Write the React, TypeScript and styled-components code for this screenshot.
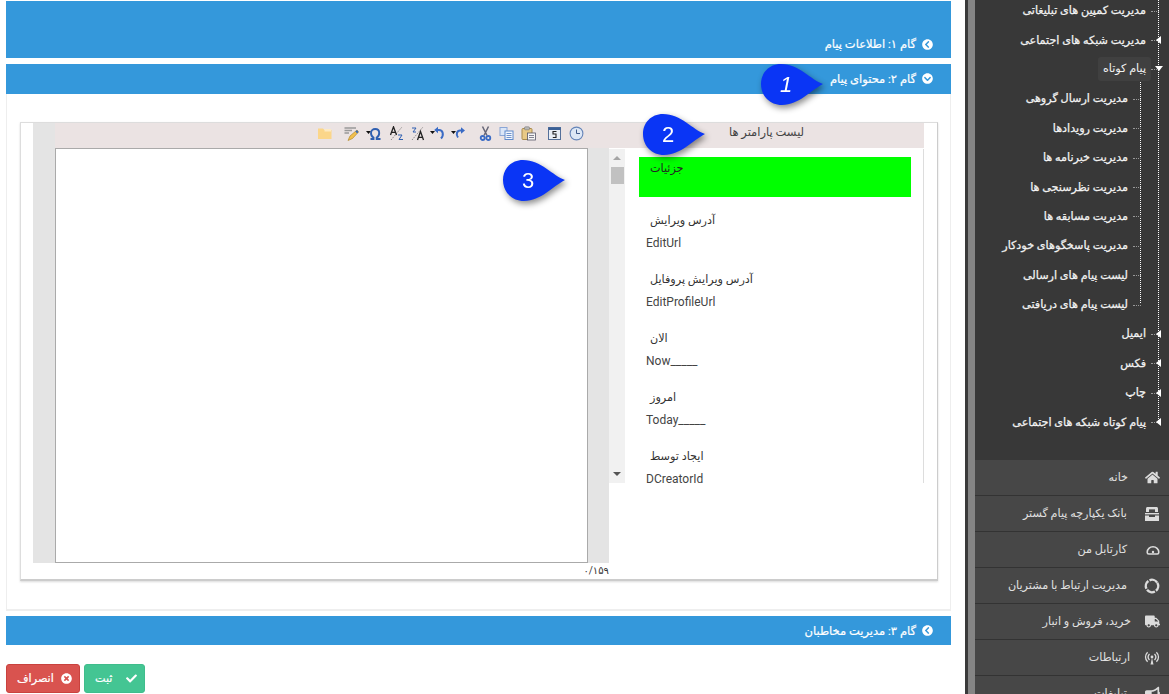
import React from "react";
import styled, { createGlobalStyle } from "styled-components";
import {
  FaBullhorn,
  FaCheck,
  FaChevronCircleDown,
  FaChevronCircleLeft,
  FaHome,
  FaTimesCircle,
  FaTruck
} from "react-icons/fa";

const FONT = `Roboto, "DejaVu Sans", sans-serif`;

const Global = createGlobalStyle`
  html, body { margin: 0; padding: 0; height: 694px; overflow: hidden; background: #fff; }
  body { font-family: ${FONT}; direction: rtl; }
  ul { list-style: none; margin: 0; padding: 0; }
`;

const Page = styled.div`
  display: flex;
  width: 1169px;
  height: 694px;
  overflow: hidden;
`;

/* ---------- sidebar ---------- */

const Sidebar = styled.aside`
  display: flex;
  width: 204px;
  height: 694px;
  flex: none;
  overflow: hidden;
`;

const SideInner = styled.div`
  flex: 1;
  display: flex;
  flex-direction: column;
`;

const Strip = styled.div`
  width: 7px;
  flex: none;
  background: #858585;
  border-left: 3px solid #3a3a3a;
`;

const TreeArea = styled.div`
  height: 460px;
  flex: none;
  background: #383838;
  overflow: hidden;
`;

const Tree = styled.ul`
  position: relative;
  margin: -4px 10px 0 0;

  &::before {
    content: "";
    position: absolute;
    top: 0;
    bottom: 14px;
    right: 0;
    border-right: 1px dotted #fff;
  }
`;

const SubTree = styled.ul`
  position: relative;
  margin-right: 18px;

  &::before {
    content: "";
    position: absolute;
    top: -2px;
    bottom: 16px;
    right: 0;
    border-right: 1px dotted #fff;
  }
`;

const TreeRow = styled.li<{ $arrow?: "left" | "down" }>`
  position: relative;
  height: 29.4px;
  display: flex;
  align-items: center;
  padding-right: 13px;
  font-size: 11.2px;
  -webkit-text-stroke: 0.25px #f2f2f2;
  color: #f2f2f2;
  white-space: nowrap;

  &::before {
    content: "";
    position: absolute;
    top: 50%;
    right: 0;
    width: 8px;
    border-top: 1px dotted #999;
  }

  ${p =>
    p.$arrow === "left"
      ? `&::after {
          content: "";
          position: absolute;
          top: calc(50% - 4px);
          right: -2px;
          border-style: solid;
          border-width: 4px 5px 4px 0;
          border-color: transparent #fff transparent transparent;
        }`
      : ""}
  ${p =>
    p.$arrow === "down"
      ? `&::after {
          content: "";
          position: absolute;
          top: calc(50% - 3px);
          right: -4px;
          border-style: solid;
          border-width: 5px 4px 0 4px;
          border-color: #fff transparent transparent transparent;
        }`
      : ""}
`;

const ActiveLabel = styled.span`
  background: #404040;
  border-radius: 3px;
  height: 24px;
  line-height: 24px;
  padding: 0 5px;
  margin-right: -5px;
  -webkit-text-stroke: 0;
`;

const MenuArea = styled.ul`
  flex: 1;
  background: #474747;
`;

const MenuRow = styled.li`
  height: 35px;
  display: flex;
  align-items: center;
  border-bottom: 1px solid #333;
  color: #e0e0e0;
  font-size: 11.2px;
  white-space: nowrap;
  padding-right: 9px;
`;

const MenuIcon = styled.span<{ $slot: number }>`
  width: ${p => p.$slot}px;
  flex: none;
  display: flex;
  justify-content: flex-start;
  color: #dcdcdc;
  font-size: 15px;
`;

/* ---------- main ---------- */

const Main = styled.main`
  position: relative;
  width: 965px;
  flex: none;
  padding: 1px 14px 0 0;
  box-sizing: border-box;
`;

const Shell = styled.div`
  width: 945px;
`;

const StepBar = styled.div<{ $height: number; $top?: number; $low?: boolean }>`
  height: ${p => p.$height}px;
  margin-top: ${p => p.$top ?? 0}px;
  box-sizing: border-box;
  background: #3498db;
  color: #fff;
  display: flex;
  align-items: ${p => (p.$low ? "flex-end" : "center")};
  gap: 6px;
  padding: 0 18px ${p => (p.$low ? 7 : 0)}px 0;
  font-size: 11.5px;
  -webkit-text-stroke: 0.2px #fff;
  svg { font-size: 11px; flex: none; margin-bottom: 1px; }
`;

const PanelBody = styled.div`
  height: 517px;
  box-sizing: border-box;
  padding: 28px 12px 0 13px;
  border: 1px solid #eee;
  border-top: 0;
  border-bottom-width: 2px;
  margin-bottom: 5px;
`;

const EditorBox = styled.div`
  height: 459px;
  box-sizing: border-box;
  border: 1px solid #ddd;
  border-bottom: 2px solid #ccc;
  border-right: 1px solid #ccc;
  padding: 0 13px 0 12px;
  display: flex;
  box-shadow: 0 1px 2px rgba(0, 0, 0, 0.15);
`;

const ListColumn = styled.div`
  width: 315px;
  flex: none;
`;

const ListTitle = styled.div`
  height: 25px;
  background: #ebe3e3;
  text-align: center;
  font-size: 11.5px;
  line-height: 19px;
  color: #444;
  border-bottom: 1px solid #fff;
`;

const ListBody = styled.div`
  position: relative;
  height: 334px;
  overflow: hidden;
  border-right: 1px solid #ddd;
  box-sizing: border-box;
  direction: ltr;
  padding: 8px 0 0 37px;
`;

const ScrollTrack = styled.div`
  position: absolute;
  left: 0;
  top: 0;
  width: 16px;
  height: 100%;
  background: #f1f1f1;
`;

const ScrollThumb = styled.div`
  position: absolute;
  left: 2px;
  top: 18px;
  width: 13px;
  height: 17px;
  background: #c1c1c1;
`;

const ScrollArrow = styled.div<{ $down?: boolean }>`
  position: absolute;
  left: 4px;
  ${p => (p.$down ? "bottom: 7px;" : "top: 7px;")}
  border-style: solid;
  border-color: transparent;
  border-width: ${p => (p.$down ? "4px 4px 0 4px" : "0 4px 4px 4px")};
  ${p => (p.$down ? "border-top-color: #555;" : "border-bottom-color: #a5a5a5;")}
`;

const ParamItem = styled.div`
  height: 59px;
  color: #333;
  font-size: 11.2px;
`;

const GreenItem = styled.div`
  width: 272px;
  height: 40px;
  margin: 0 0 14px -7px;
  background: #0f0;
  box-sizing: border-box;
  padding: 5px 0 0 11px;
  font-size: 11.2px;
  color: #222;
  direction: ltr;
`;

const ParamLabel = styled.div`
  height: 23px;
  line-height: 20px;
  margin-left: 4px;
  direction: rtl;
  width: fit-content;
`;

const ParamCode = styled.div`
  height: 19px;
  line-height: 18px;
  font-size: 12px;
  color: #444;
`;

const EditorColumn = styled.div`
  width: 576px;
  flex: none;
`;

const EditorFrame = styled.div`
  display: grid;
  grid-template-columns: 21px 533px 22px;
  grid-template-rows: 25px 415px;
`;

const Toolbar = styled.div`
  grid-column: 1 / 3;
  grid-row: 1;
  background: #ebe3e3;
  display: flex;
  align-items: center;
  padding: 0 25px 4px 0;
  box-sizing: border-box;
`;

const ToolIcon = styled.svg<{ $gap?: number }>`
  width: 15px;
  height: 15px;
  flex: none;
  margin-left: ${p => p.$gap ?? 0}px;
`;

const SideGutter = styled.div<{ $left?: boolean }>`
  background: #e4e4e4;
  grid-column: ${p => (p.$left ? 3 : 1)};
  grid-row: ${p => (p.$left ? "1 / 3" : "2")};
`;

const TextArea = styled.div`
  grid-column: 2;
  grid-row: 2;
  background: #fff;
  border: 1px solid #aaa;
  box-sizing: border-box;
`;

const Counter = styled.div`
  font-size: 10px;
  line-height: 16px;
  color: #333;
`;

const Actions = styled.div`
  margin-top: 19px;
  display: flex;
  justify-content: flex-end;
  gap: 4px;
`;

const ActionButton = styled.button<{ $tone: string; $border: string; $w: number }>`
  width: ${p => p.$w}px;
  height: 29px;
  border: 1px solid ${p => p.$border};
  border-radius: 3px;
  background: ${p => p.$tone};
  color: #fff;
  font-family: ${FONT};
  font-size: 11.2px;
  -webkit-text-stroke: 0.2px #fff;
  padding: 0 7px 0 10px;
  display: flex;
  align-items: center;
  justify-content: space-between;
  box-sizing: border-box;
  svg { font-size: 11px; flex: none; }
`;

const Bubble = styled.div<{ $x: number; $y: number }>`
  position: absolute;
  left: ${p => p.$x}px;
  top: ${p => p.$y}px;
  width: 64px;
  height: 42px;
  filter: drop-shadow(2px 3px 3px rgba(0, 0, 0, 0.45));

  svg { display: block; }
`;

const BubbleNumber = styled.span<{ $italic?: boolean }>`
  position: absolute;
  left: 14px;
  top: 8px;
  width: 22px;
  text-align: center;
  direction: ltr;
  color: #fff;
  font-family: "Liberation Sans", sans-serif;
  font-size: 22px;
  line-height: 26px;
  font-style: ${p => (p.$italic ? "italic" : "normal")};
`;

/* ---------- drawings ---------- */

const BubbleShape = () => (
  <svg width="64" height="42" viewBox="0 0 64 42">
    <path
      d="M62 20 C50 16 38 0 20 0 C8 0 0 9 0 20 C0 32 9 41 21 41 C38 41 50 26 62 20 Z"
      fill="#0a35f5"
    />
  </svg>
);

const BankIcon = () => (
  <svg width="16" height="16" viewBox="0 0 16 16" fill="#dcdcdc">
    <path d="M2 2.5 C2 1.7 2.7 1 3.5 1 H12.5 C13.3 1 14 1.7 14 2.5 V6 H2 Z" />
    <rect x="5" y="3.4" width="6" height="3" fill="#474747" />
    <rect x="1" y="7" width="14" height="1.4" />
    <path d="M1 9.4 H5 V11 H11 V9.4 H15 V15 H1 Z" />
  </svg>
);

const GaugeIcon = () => (
  <svg width="14" height="14" viewBox="0 0 14 14" fill="none" stroke="#dcdcdc">
    <path d="M2.8 11 H11.2 C12.2 11 12.8 10.2 12.8 9.3 C12.8 6 10.2 3.8 7 3.8 C3.8 3.8 1.2 6 1.2 9.3 C1.2 10.2 1.8 11 2.8 11 Z" strokeWidth="1.6" />
    <circle cx="7" cy="9" r="1.2" fill="#dcdcdc" stroke="none" />
  </svg>
);

const RingIcon = () => (
  <svg width="16" height="16" viewBox="0 0 16 16" fill="none">
    <circle
      cx="8"
      cy="8"
      r="6.2"
      stroke="#dcdcdc"
      strokeWidth="2.4"
      strokeDasharray="8.4 1.33"
      transform="rotate(-30 8 8)"
    />
  </svg>
);

const AntennaIcon = () => (
  <svg width="16" height="16" viewBox="0 0 16 16" fill="none" stroke="#dcdcdc" strokeWidth="1.3">
    <path d="M3.6 2.2 C0.8 5 0.8 9 3.6 11.8" />
    <path d="M5.5 4 C3.8 5.8 3.8 8.2 5.5 10" />
    <path d="M12.4 2.2 C15.2 5 15.2 9 12.4 11.8" />
    <path d="M10.5 4 C12.2 5.8 12.2 8.2 10.5 10" />
    <circle cx="8" cy="7" r="1.4" fill="#dcdcdc" stroke="none" />
    <path d="M8 8 L6.5 14.5 H9.5 Z" fill="#dcdcdc" stroke="none" />
  </svg>
);

const FolderTool = () => (
  <ToolIcon viewBox="0 0 15 15">
    <path d="M1 2.5 H6 L7.5 4 H14.5 V13 H1 Z" fill="#fbd68a" />
    <path d="M7.5 3 H14 V5.5 H7.5 Z" fill="#fdeac2" />
  </ToolIcon>
);

const PenTool = () => (
  <ToolIcon viewBox="0 0 15 15" $gap={12}>
    <path d="M0.5 2 H12 M0.5 4.5 H8 M0.5 7 H5" stroke="#999" strokeWidth="1.3" />
    <path d="M13 4 L6 10 L4 14.5 L8.5 12.5 L14.5 6 Z" fill="#f2c04c" stroke="#a8801f" strokeWidth="0.6" />
    <path d="M13 4 L14.5 6 L13 7.4 L11.4 5.4 Z" fill="#3a6bb5" />
  </ToolIcon>
);

const OmegaTool = () => (
  <ToolIcon viewBox="0 0 15 15" $gap={7}>
    <path d="M0 5 L5 5 L2.5 8 Z" fill="#111" />
    <path d="M4.5 13 H7.5 V11.5 C5.8 10.6 5 9 5 7 C5 4.6 6.8 3 9.2 3 C11.6 3 13.2 4.6 13.2 7 C13.2 9 12.4 10.6 10.7 11.5 V13 H14.5" fill="none" stroke="#2f5fb0" strokeWidth="1.9" />
  </ToolIcon>
);

const TextDirTool = ({ flip }: { flip?: boolean }) => (
  <ToolIcon viewBox="0 0 15 15" $gap={flip ? 6 : 8}>
    <path d="M2 14 L13 1" stroke="#666" strokeWidth="0.7" strokeDasharray="1.5 1" />
    {flip ? (
      <>
        <path d="M2 2 H6 L3 6 H6" fill="none" stroke="#2f5fb0" strokeWidth="1" />
        <path d="M7.5 14 L10.5 5.5 L13.5 14 M8.7 11.3 H12.3" fill="none" stroke="#222" strokeWidth="1.3" />
      </>
    ) : (
      <>
        <path d="M1.5 9 L4.5 0.8 L7.5 9 M2.7 6.3 H6.3" fill="none" stroke="#222" strokeWidth="1.3" />
        <path d="M9 9 H13 L10 13.5 H14" fill="none" stroke="#2f5fb0" strokeWidth="1" />
      </>
    )}
  </ToolIcon>
);

const UndoTool = () => (
  <ToolIcon viewBox="0 0 15 15" $gap={5}>
    <path d="M0 5 H5 L2.5 8 Z" fill="#111" />
    <path d="M11 12.5 C14.2 9 13 4 9 4 H7.5" fill="none" stroke="#3a6bc5" strokeWidth="2" />
    <path d="M8 0.8 L4.2 4 L8 7.2 Z" fill="#3a6bc5" />
  </ToolIcon>
);

const RedoTool = () => (
  <ToolIcon viewBox="0 0 15 15" $gap={6}>
    <path d="M0 5 H5 L2.5 8 Z" fill="#111" />
    <path d="M7 11.5 C4.6 8.5 6 4.5 9 4.5 H10.5" fill="none" stroke="#3a6bc5" strokeWidth="2" />
    <path d="M10 1.3 L14 4.5 L10 7.7 Z" fill="#3a6bc5" />
  </ToolIcon>
);

const CutTool = () => (
  <ToolIcon viewBox="0 0 15 15" $gap={12}>
    <path d="M4.5 0.5 L9 9.5 M10.5 0.5 L6 9.5" stroke="#667" strokeWidth="1.5" />
    <circle cx="4.7" cy="12" r="2" fill="none" stroke="#3a6bc5" strokeWidth="1.8" />
    <circle cx="10.3" cy="12" r="2" fill="none" stroke="#3a6bc5" strokeWidth="1.8" />
  </ToolIcon>
);

const CopyTool = () => (
  <ToolIcon viewBox="0 0 15 15" $gap={6}>
    <rect x="1" y="1.5" width="7" height="8" fill="#dbe6f7" stroke="#8aa6d6" />
    <rect x="6" y="5" width="8" height="8.5" fill="#f3f7fd" stroke="#5f8acb" />
    <path d="M7.5 7.5 H12.5 M7.5 9.5 H12.5 M7.5 11.5 H12.5" stroke="#4d79c0" strokeWidth="0.8" />
  </ToolIcon>
);

const PasteTool = () => (
  <ToolIcon viewBox="0 0 15 15" $gap={7}>
    <rect x="1" y="2.5" width="10" height="11" rx="1" fill="#e8c986" stroke="#a98b4d" />
    <rect x="3.5" y="0.8" width="5" height="3" rx="1" fill="#b7b7b7" stroke="#777" strokeWidth="0.6" />
    <rect x="6.5" y="7" width="8" height="7" fill="#f5f5f5" stroke="#556" strokeWidth="0.8" />
    <path d="M8 9.5 H13 M8 11.5 H13" stroke="#667" strokeWidth="0.8" />
  </ToolIcon>
);

const CalendarTool = () => (
  <ToolIcon viewBox="0 0 15 15" $gap={11}>
    <rect x="1.5" y="1.5" width="12" height="12" fill="#e9eef5" stroke="#54709a" />
    <rect x="1.5" y="1.5" width="12" height="2.5" fill="#3a5f95" />
    <path d="M9.5 5.5 H6 V8 H9 V11.5 H5.8" fill="none" stroke="#222" strokeWidth="1.1" />
  </ToolIcon>
);

const ClockTool = () => (
  <ToolIcon viewBox="0 0 15 15" $gap={7}>
    <circle cx="7.5" cy="7.5" r="6.4" fill="#dde7f5" stroke="#6484b8" strokeWidth="1.1" />
    <path d="M7.5 3.5 V7.5 H11" fill="none" stroke="#405b8a" strokeWidth="1" />
  </ToolIcon>
);

/* ---------- data ---------- */

const PARAMS = [
  { label: "آدرس ویرایش", code: "EditUrl" },
  { label: "آدرس ویرایش پروفایل", code: "EditProfileUrl" },
  { label: "الان", code: "Now_____" },
  { label: "امروز", code: "Today_____" },
  { label: "ایجاد توسط", code: "DCreatorId" }
];

const SMS_ITEMS = [
  "مدیریت ارسال گروهی",
  "مدیریت رویدادها",
  "مدیریت خبرنامه ها",
  "مدیریت نظرسنجی ها",
  "مدیریت مسابقه ها",
  "مدیریت پاسخگوهای خودکار",
  "لیست پیام های ارسالی",
  "لیست پیام های دریافتی"
];

const MENU = [
  { label: "خانه", icon: <FaHome />, slot: 32 },
  { label: "بانک یکپارچه پیام گستر", icon: <BankIcon />, slot: 33 },
  { label: "کارتابل من", icon: <GaugeIcon />, slot: 33 },
  { label: "مدیریت ارتباط با مشتریان", icon: <RingIcon />, slot: 33 },
  { label: "خرید، فروش و انبار", icon: <FaTruck />, slot: 29 },
  { label: "ارتباطات", icon: <AntennaIcon />, slot: 30 },
  { label: "تبلیغات", icon: <FaBullhorn />, slot: 33 }
];

export default function App() {
  return (
    <>
      <Global />
      <Page>
        <Sidebar>
          <SideInner>
            <TreeArea>
              <Tree>
                <TreeRow>مدیریت کمپین های تبلیغاتی</TreeRow>
                <TreeRow $arrow="left">مدیریت شبکه های اجتماعی</TreeRow>
                <TreeRow $arrow="down">
                  <ActiveLabel>پیام کوتاه</ActiveLabel>
                </TreeRow>
                <SubTree>
                  {SMS_ITEMS.map(item => (
                    <TreeRow key={item}>{item}</TreeRow>
                  ))}
                </SubTree>
                <TreeRow $arrow="left">ایمیل</TreeRow>
                <TreeRow $arrow="left">فکس</TreeRow>
                <TreeRow $arrow="left">چاپ</TreeRow>
                <TreeRow $arrow="left">پیام کوتاه شبکه های اجتماعی</TreeRow>
              </Tree>
            </TreeArea>
            <MenuArea>
              {MENU.map(m => (
                <MenuRow key={m.label}>
                  <MenuIcon $slot={m.slot}>{m.icon}</MenuIcon>
                  {m.label}
                </MenuRow>
              ))}
            </MenuArea>
          </SideInner>
          <Strip />
        </Sidebar>

        <Main>
          <Shell>
            <StepBar $height={57} $low>
              <FaChevronCircleLeft />
              گام ۱: اطلاعات پیام
            </StepBar>
            <StepBar $height={30} $top={6}>
              <FaChevronCircleDown />
              گام ۲: محتوای پیام
            </StepBar>
            <PanelBody>
              <EditorBox>
                <ListColumn>
                  <ListTitle>لیست پارامتر ها</ListTitle>
                  <ListBody>
                    <ScrollTrack>
                      <ScrollArrow />
                      <ScrollThumb />
                      <ScrollArrow $down />
                    </ScrollTrack>
                    <GreenItem>
                      <bdi>جزئیات</bdi>
                    </GreenItem>
                    {PARAMS.map(p => (
                      <ParamItem key={p.code}>
                        <ParamLabel>{p.label}</ParamLabel>
                        <ParamCode>{p.code}</ParamCode>
                      </ParamItem>
                    ))}
                  </ListBody>
                </ListColumn>
                <EditorColumn>
                  <EditorFrame>
                    <Toolbar>
                      <ClockTool />
                      <CalendarTool />
                      <PasteTool />
                      <CopyTool />
                      <CutTool />
                      <RedoTool />
                      <UndoTool />
                      <TextDirTool flip />
                      <TextDirTool />
                      <OmegaTool />
                      <PenTool />
                      <FolderTool />
                    </Toolbar>
                    <SideGutter />
                    <TextArea />
                    <SideGutter $left />
                  </EditorFrame>
                  <Counter>۰/۱۵۹</Counter>
                </EditorColumn>
              </EditorBox>
            </PanelBody>
            <StepBar $height={29}>
              <FaChevronCircleLeft />
              گام ۳: مدیریت مخاطبان
            </StepBar>
            <Actions>
              <ActionButton $tone="#44c593" $border="#3fbd8c" $w={61}>
                <FaCheck />
                ثبت
              </ActionButton>
              <ActionButton $tone="#d9534f" $border="#c9423e" $w={74}>
                <FaTimesCircle />
                انصراف
              </ActionButton>
            </Actions>
          </Shell>
          <Bubble $x={761} $y={64}>
            <BubbleShape />
            <BubbleNumber $italic>1</BubbleNumber>
          </Bubble>
          <Bubble $x={643} $y={114}>
            <BubbleShape />
            <BubbleNumber>2</BubbleNumber>
          </Bubble>
          <Bubble $x={503} $y={160}>
            <BubbleShape />
            <BubbleNumber>3</BubbleNumber>
          </Bubble>
        </Main>
      </Page>
    </>
  );
}
